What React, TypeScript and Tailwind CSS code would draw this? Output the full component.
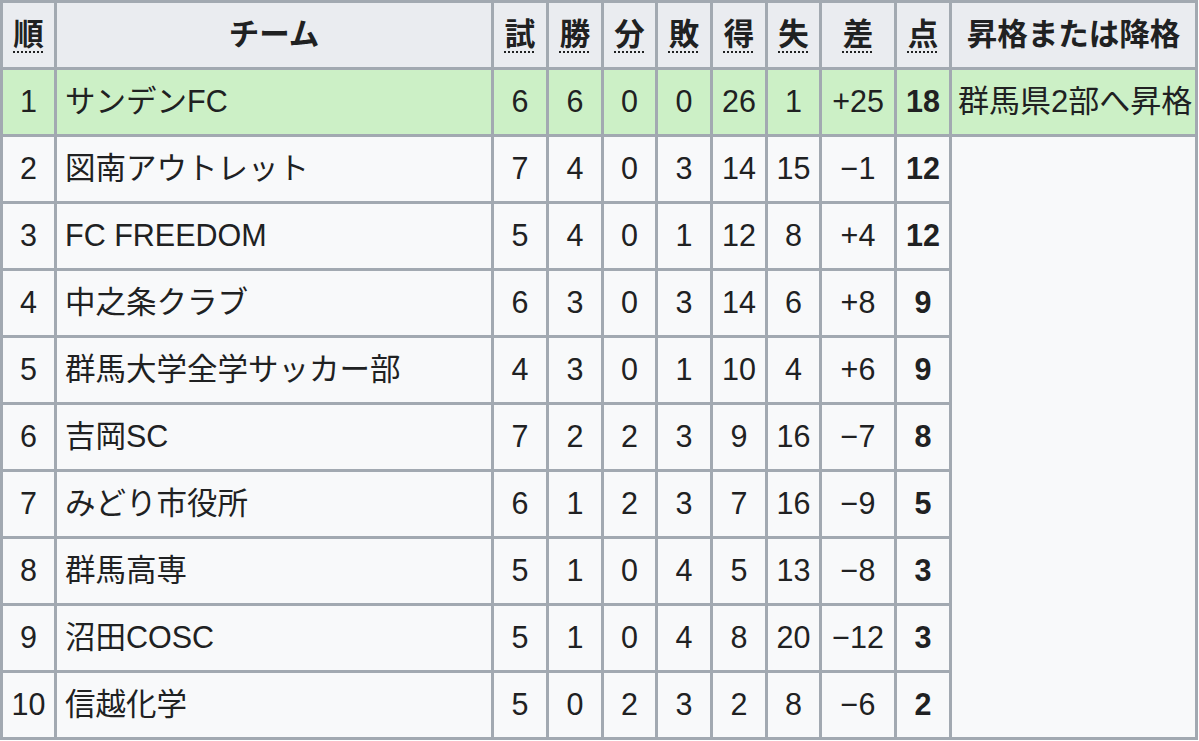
import React from "react";

type Row = {
  pos: number;
  team: string;
  p: number;
  w: number;
  d: number;
  l: number;
  gf: number;
  ga: number;
  gd: string;
  pts: number;
};

const rows: Row[] = [
  { pos: 1, team: "サンデンFC", p: 6, w: 6, d: 0, l: 0, gf: 26, ga: 1, gd: "+25", pts: 18 },
  { pos: 2, team: "図南アウトレット", p: 7, w: 4, d: 0, l: 3, gf: 14, ga: 15, gd: "−1", pts: 12 },
  { pos: 3, team: "FC FREEDOM", p: 5, w: 4, d: 0, l: 1, gf: 12, ga: 8, gd: "+4", pts: 12 },
  { pos: 4, team: "中之条クラブ", p: 6, w: 3, d: 0, l: 3, gf: 14, ga: 6, gd: "+8", pts: 9 },
  { pos: 5, team: "群馬大学全学サッカー部", p: 4, w: 3, d: 0, l: 1, gf: 10, ga: 4, gd: "+6", pts: 9 },
  { pos: 6, team: "吉岡SC", p: 7, w: 2, d: 2, l: 3, gf: 9, ga: 16, gd: "−7", pts: 8 },
  { pos: 7, team: "みどり市役所", p: 6, w: 1, d: 2, l: 3, gf: 7, ga: 16, gd: "−9", pts: 5 },
  { pos: 8, team: "群馬高専", p: 5, w: 1, d: 0, l: 4, gf: 5, ga: 13, gd: "−8", pts: 3 },
  { pos: 9, team: "沼田COSC", p: 5, w: 1, d: 0, l: 4, gf: 8, ga: 20, gd: "−12", pts: 3 },
  { pos: 10, team: "信越化学", p: 5, w: 0, d: 2, l: 3, gf: 2, ga: 8, gd: "−6", pts: 2 },
];

const font = {
  fontFamily: '"Liberation Sans", "Noto Sans CJK JP", sans-serif',
};

function Th({ children, abbr }: { children: React.ReactNode; abbr?: boolean }) {
  return (
    <div className="bg-[#eaecf0] flex items-center justify-center font-bold text-[30.5px] text-[#202122] whitespace-nowrap">
      {abbr ? (
        <span className="underline decoration-dotted decoration-2 underline-offset-[6px]">{children}</span>
      ) : (
        children
      )}
    </div>
  );
}

export default function App() {
  return (
    <div className="w-[1199px] h-[741px] bg-white" style={font}>
      <div className="grid w-[1198px] bg-[#a2a9b1] p-[3px] gap-[3px] grid-cols-[51px_434px_52px_52px_51px_52px_52px_51px_72px_52px_243px] grid-rows-[repeat(11,64px)] text-[#202122]">
        <Th abbr>順</Th>
        <Th>チーム</Th>
        <Th abbr>試</Th>
        <Th abbr>勝</Th>
        <Th abbr>分</Th>
        <Th abbr>敗</Th>
        <Th abbr>得</Th>
        <Th abbr>失</Th>
        <Th abbr>差</Th>
        <Th abbr>点</Th>
        <Th>昇格または降格</Th>
        {rows.map((r) => {
          const bg = r.pos === 1 ? "bg-[#ccf0c6]" : "bg-[#f8f9fa]";
          const num = `${bg} flex items-center justify-center text-[30.5px]`;
          return (
            <React.Fragment key={r.pos}>
              <div className={num}>{r.pos}</div>
              <div className={`${bg} flex items-center pl-[8px] text-[30.5px] whitespace-nowrap`}>{r.team}</div>
              <div className={num}>{r.p}</div>
              <div className={num}>{r.w}</div>
              <div className={num}>{r.d}</div>
              <div className={num}>{r.l}</div>
              <div className={num}>{r.gf}</div>
              <div className={num}>{r.ga}</div>
              <div className={num}>{r.gd}</div>
              <div className={`${num} font-bold`}>{r.pts}</div>
              {r.pos === 1 && (
                <div className={`${bg} flex items-center pl-[6px] text-[31px] whitespace-nowrap`}>群馬県2部へ昇格</div>
              )}
              {r.pos === 2 && <div className="bg-[#f8f9fa] row-span-9" />}
            </React.Fragment>
          );
        })}
      </div>
    </div>
  );
}
